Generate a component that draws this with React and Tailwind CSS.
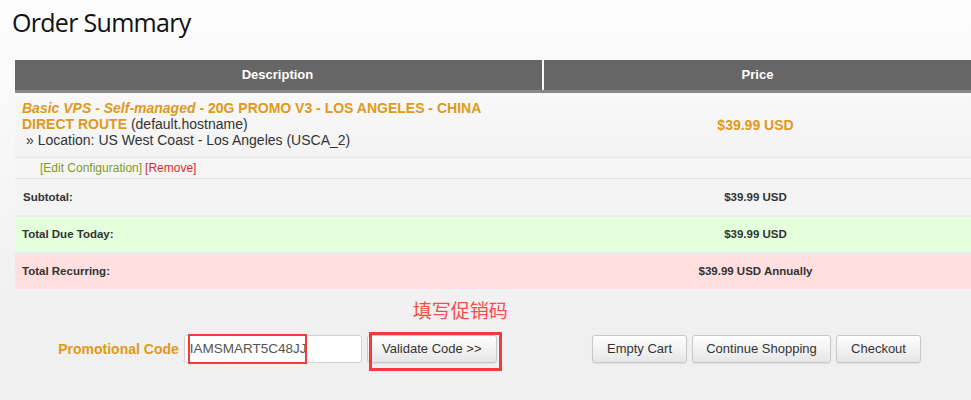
import React from "react";

const orange = "text-[#e0991b]";

const Btn = ({ children, className = "" }) => (
  <button
    className={`h-[28px] px-[11px] rounded-[3px] border border-[#c8c8c8] bg-[linear-gradient(#ffffff,#e6e6e6)] text-[13px] text-[#333] shadow-[0_1px_1px_rgba(0,0,0,0.08)] ${className}`}
  >
    {children}
  </button>
);

const App = () => {
  return (
    <div
      className="w-[971px] h-[400px] overflow-hidden bg-[linear-gradient(#fdfdfd,#f0f0f0_320px)] text-[#333]"
      style={{ fontFamily: '"Liberation Sans", Arial, sans-serif' }}
    >
      {/* heading */}
      <div className="h-[60px] pl-[12px] pt-[5px]">
        <h1
          className="text-[25px] leading-[34px] text-[#111] tracking-[-0.7px]"
          style={{ fontFamily: '"Open Sans", sans-serif' }}
        >
          Order Summary
        </h1>
      </div>

      {/* cart table */}
      <div className="ml-[15px] w-[956px]">
        <div className="grid grid-cols-[525px_429px] gap-x-[2px] bg-[#666] border-b-[3px] border-[#888]">
          <div className="h-[30px] flex items-center justify-center text-white font-bold text-[13px]">
            Description
          </div>
          <div className="h-[30px] flex items-center justify-center text-white font-bold text-[13px] border-l-2 border-[#f7f7f7]">
            Price
          </div>
        </div>

        <div className="grid grid-cols-[525px_431px] bg-[linear-gradient(#f8f8f8,#f3f3f3)] border-b border-[#e6e6e6]">
          <div className="h-[64px] pl-[7px] pt-[7px] text-[14px] leading-[16px]">
            <span className={`${orange} font-bold`}>
              <i>Basic VPS - Self-managed</i> - 20G PROMO V3 - LOS ANGELES - CHINA
              <br />
              DIRECT ROUTE
            </span>{" "}
            (default.hostname)
            <div className="pl-[4px]">» Location: US West Coast - Los Angeles (USCA_2)</div>
          </div>
          <div className={`flex items-center justify-center font-bold text-[14px] ${orange}`}>
            $39.99 USD
          </div>
        </div>

        <div className="h-[21px] bg-[#f5f5f5] border-b border-[#e6e6e6] pl-[25px] flex items-center text-[12px]">
          <span className="text-[#7f9a2c]">[Edit Configuration]</span>
          <span className="ml-[3px] text-[#cc3333]">[Remove]</span>
        </div>

        <div className="h-[1px]" />

        <div className="grid grid-cols-[525px_431px] h-[35px] bg-[#f4f4f4] font-bold text-[11.5px] text-[#333]">
          <div className="flex items-center pl-[8px]">Subtotal:</div>
          <div className="flex items-center justify-center">$39.99 USD</div>
        </div>
        <div className="h-[2px] bg-[#ebebeb]" />
        <div className="grid grid-cols-[525px_431px] h-[35px] bg-[#e4ffdb] font-bold text-[11.5px] text-[#333]">
          <div className="flex items-center pl-[7px]">Total Due Today:</div>
          <div className="flex items-center justify-center">$39.99 USD</div>
        </div>
        <div className="h-[3px] bg-[#ebebeb]" />
        <div className="grid grid-cols-[525px_431px] h-[34px] bg-[#ffdfdf] font-bold text-[11.5px] text-[#333]">
          <div className="flex items-center pl-[7px]">Total Recurring:</div>
          <div className="flex items-center justify-center">$39.99 USD Annually</div>
        </div>
      </div>

      {/* promo + actions */}
      <div className="ml-[15px] w-[956px] grid grid-cols-[525px_431px] pt-[46px]">
        <div className="flex items-center justify-center gap-[5px]">
          <span className={`font-bold text-[14px] ${orange}`}>Promotional Code</span>
          <div className="relative">
            <div className="w-[178px] h-[28px] bg-white border border-[#d0d0d0] rounded-[3px] flex items-center pl-[5px] text-[13.5px] text-[#555]">
              IAMSMART5C48JJ
            </div>
            <div className="absolute left-[4px] top-[-1px] w-[119px] h-[30px] border-2 border-[#f03c3c]" />
          </div>
          <div className="relative">
            <Btn className="w-[130px]">Validate Code &gt;&gt;</Btn>
            <div className="absolute left-[2px] top-[-3px] w-[133px] h-[39px] border-[3px] border-[#f03c3c]" />
            <div
              className="absolute left-[46px] top-[-37px] whitespace-nowrap text-[19px] leading-[24px] text-[#ff4a4a]"
              style={{ fontFamily: '"Noto Sans CJK SC", sans-serif' }}
            >
              填写促销码
            </div>
          </div>
        </div>
        <div className="flex items-center justify-center gap-[5px] pl-[2px]">
          <Btn className="w-[95px]">Empty Cart</Btn>
          <Btn className="w-[139px]">Continue Shopping</Btn>
          <Btn className="w-[85px]">Checkout</Btn>
        </div>
      </div>
    </div>
  );
};

export default App;
